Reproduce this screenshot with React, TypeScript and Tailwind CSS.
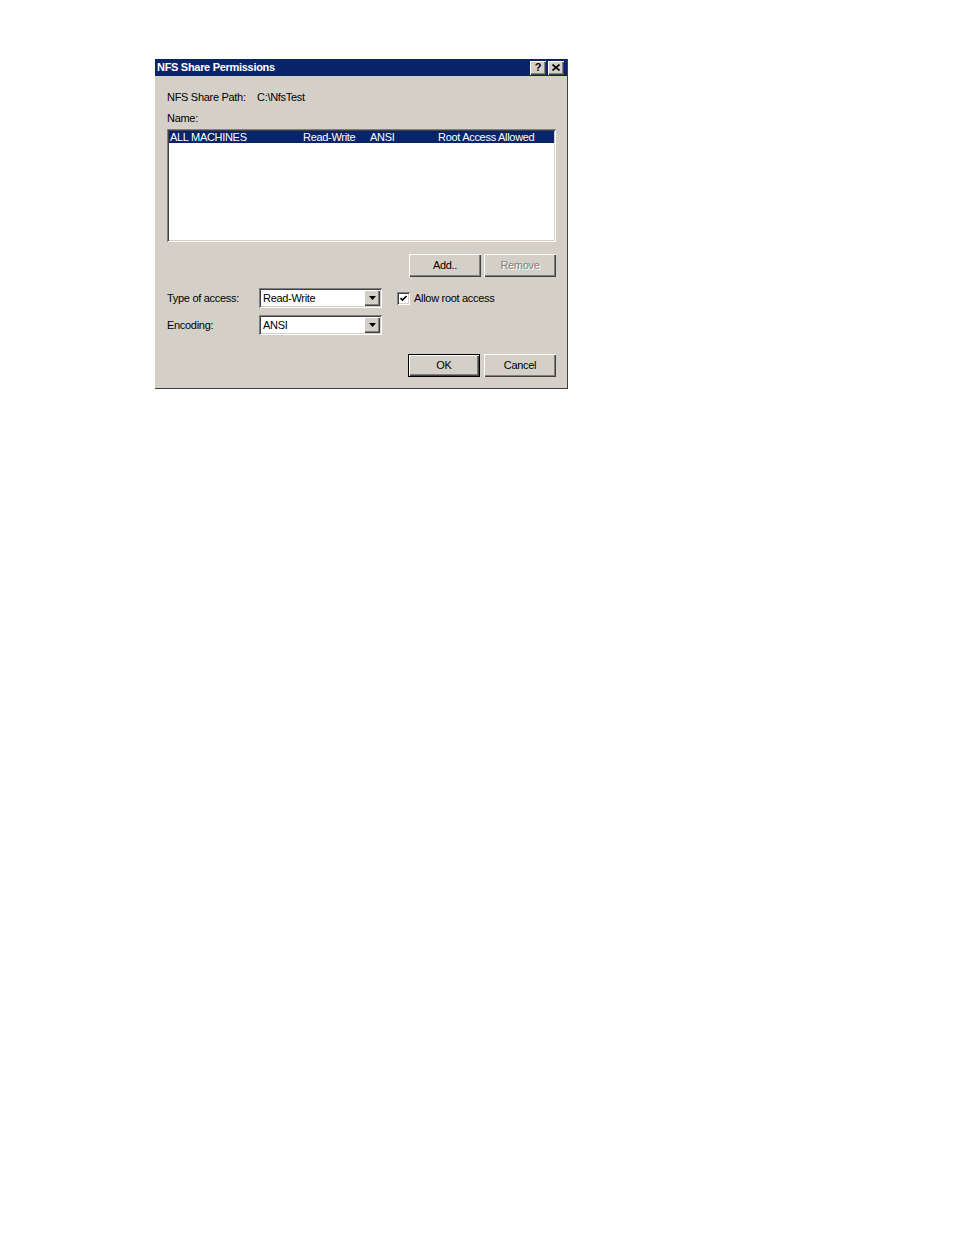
import React from 'react';

const raised =
  'shadow-[inset_1px_1px_0_#ffffff,inset_-1px_-1px_0_#404040,inset_-2px_-2px_0_#808080]';
const sunken =
  'shadow-[inset_1px_1px_0_#808080,inset_-1px_-1px_0_#ffffff,inset_2px_2px_0_#404040,inset_-2px_-2px_0_#d4d0c8]';

const Button: React.FC<{ label: string; disabled?: boolean; isDefault?: boolean }> = ({
  label,
  disabled,
  isDefault,
}) => {
  if (isDefault) {
    return (
      <div className="w-[72px] h-[23px] border border-black bg-[#d4d0c8]">
        <div className={`w-full h-full flex items-center justify-center ${raised}`}>
          <span className="text-black">{label}</span>
        </div>
      </div>
    );
  }
  return (
    <div className={`w-[72px] h-[23px] bg-[#d4d0c8] flex items-center justify-center ${raised}`}>
      {disabled ? (
        <span className="text-[#808080] [text-shadow:1px_1px_0_#ffffff]">{label}</span>
      ) : (
        <span className="text-black">{label}</span>
      )}
    </div>
  );
};

const Combo: React.FC<{ value: string }> = ({ value }) => (
  <div className={`w-[123px] h-[20px] bg-white flex items-center p-[2px] ${sunken}`}>
    <span className="flex-1 pl-[2px] text-black">{value}</span>
    <div className={`w-[16px] h-full bg-[#d4d0c8] flex items-center justify-center ${raised}`}>
      <svg width="7" height="4" viewBox="0 0 7 4">
        <path d="M0 0h7L3.5 4z" fill="#000" />
      </svg>
    </div>
  </div>
);

const TitleButton: React.FC<{ children: React.ReactNode }> = ({ children }) => (
  <div className={`w-[16px] h-[14px] bg-[#d4d0c8] flex items-center justify-center ${raised}`}>
    {children}
  </div>
);

export default function App() {
  const rows = [{ name: 'ALL MACHINES', access: 'Read-Write', enc: 'ANSI', root: 'Root Access Allowed' }];

  return (
    <div className="w-[954px] h-[1235px] bg-white" style={{ fontFamily: '"Liberation Sans", Arial, sans-serif' }}>
      <div className="ml-[154px] pt-[58px]">
        <div className="w-[414px] h-[331px] bg-[#d4d0c8] p-[1px] text-[11px] leading-[13px] tracking-[-0.3px] shadow-[inset_1px_1px_0_#ffffff,inset_-1px_-1px_0_#404040]">
          <div className="h-[17px] bg-[#0a246a] flex items-center justify-between pl-[2px] pr-[3px]">
            <span className="text-white font-bold">NFS Share Permissions</span>
            <div className="flex gap-[2px]">
              <TitleButton>
                <span className="text-black font-bold text-[11px] leading-none">?</span>
              </TitleButton>
              <TitleButton>
                <svg width="8" height="7" viewBox="0 0 8 7">
                  <path d="M0.5 0.5L7.5 6.5M7.5 0.5L0.5 6.5" stroke="#000" strokeWidth="1.6" />
                </svg>
              </TitleButton>
            </div>
          </div>

          <div className="px-[12px] pt-[15px]">
            <div className="flex">
              <span className="w-[90px]">NFS Share Path:</span>
              <span>C:\NfsTest</span>
            </div>
            <div className="mt-[8px]">Name:</div>

            <div className={`mt-[4px] w-[389px] h-[113px] bg-white p-[2px] ${sunken}`}>
              {rows.map((r) => (
                <div key={r.name} className="h-[12px] bg-[#0a246a] text-white flex items-center leading-[12px]">
                  <span className="w-[134px] pl-[1px]">{r.name}</span>
                  <span className="w-[67px]">{r.access}</span>
                  <span className="w-[68px]">{r.enc}</span>
                  <span>{r.root}</span>
                </div>
              ))}
            </div>

            <div className="mt-[12px] flex justify-end gap-[3px] w-[389px]">
              <Button label="Add.." />
              <Button label="Remove" disabled />
            </div>

            <div className="mt-[11px] flex items-center">
              <span className="w-[92px]">Type of access:</span>
              <Combo value="Read-Write" />
              <div className="ml-[15px] flex items-center">
                <div className={`w-[13px] h-[13px] bg-white flex items-center justify-center ${sunken}`}>
                  <svg width="7" height="7" viewBox="0 0 7 7">
                    <path d="M0.5 3L2.5 5L6.5 1" stroke="#000" strokeWidth="1.6" fill="none" />
                  </svg>
                </div>
                <span className="ml-[4px]">Allow root access</span>
              </div>
            </div>

            <div className="mt-[7px] flex items-center">
              <span className="w-[92px]">Encoding:</span>
              <Combo value="ANSI" />
            </div>

            <div className="mt-[19px] flex justify-end gap-[4px] w-[389px]">
              <Button label="OK" isDefault />
              <Button label="Cancel" />
            </div>
          </div>
        </div>
      </div>
    </div>
  );
}
